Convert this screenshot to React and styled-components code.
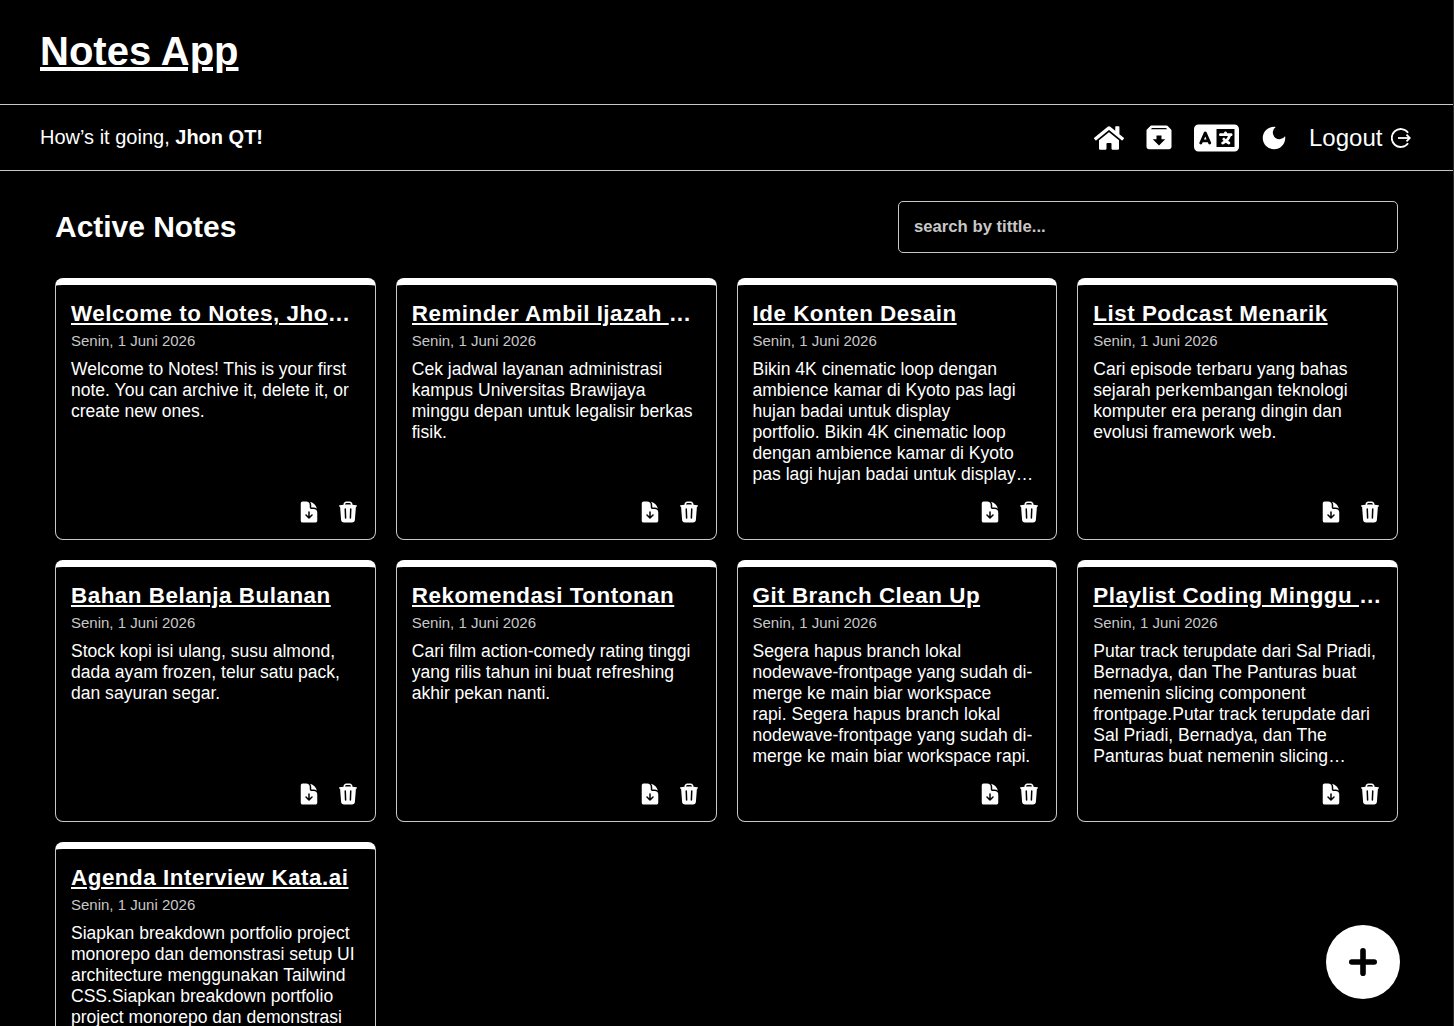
import React, { useState } from 'react';
import styled, { createGlobalStyle } from 'styled-components';
import { FaHome } from 'react-icons/fa';
import { FaLanguage } from 'react-icons/fa6';
import { BiSolidArchiveIn } from 'react-icons/bi';
import { MdDarkMode } from 'react-icons/md';
import { HiDocumentArrowDown, HiTrash } from 'react-icons/hi2';

const notes = [
  {
    id: 1,
    title: 'Welcome to Notes, Jhon QT!',
    body: 'Welcome to Notes! This is your first note. You can archive it, delete it, or create new ones.',
  },
  {
    id: 2,
    title: 'Reminder Ambil Ijazah Kampus',
    body: 'Cek jadwal layanan administrasi kampus Universitas Brawijaya minggu depan untuk legalisir berkas fisik.',
  },
  {
    id: 3,
    title: 'Ide Konten Desain',
    body: 'Bikin 4K cinematic loop dengan ambience kamar di Kyoto pas lagi hujan badai untuk display portfolio.\u00a0Bikin 4K cinematic loop dengan ambience kamar di Kyoto pas lagi hujan badai untuk display portfolio.',
  },
  {
    id: 4,
    title: 'List Podcast Menarik',
    body: 'Cari episode terbaru yang bahas sejarah perkembangan teknologi komputer era perang dingin dan evolusi framework web.',
  },
  {
    id: 5,
    title: 'Bahan Belanja Bulanan',
    body: 'Stock kopi isi ulang, susu almond, dada ayam frozen, telur satu pack, dan sayuran segar.',
  },
  {
    id: 6,
    title: 'Rekomendasi Tontonan',
    body: 'Cari film action-comedy rating tinggi yang rilis tahun ini buat refreshing akhir pekan nanti.',
  },
  {
    id: 7,
    title: 'Git Branch Clean Up',
    body: 'Segera hapus branch lokal nodewave-frontpage yang sudah di-merge ke main biar workspace rapi.\u00a0Segera hapus branch lokal nodewave-frontpage yang sudah di-merge ke main biar workspace rapi.',
  },
  {
    id: 8,
    title: 'Playlist Coding Minggu Ini',
    body: 'Putar track terupdate dari Sal Priadi, Bernadya, dan The Panturas buat nemenin slicing component frontpage.Putar track terupdate dari Sal Priadi, Bernadya, dan The Panturas buat nemenin slicing component frontpage.',
  },
  {
    id: 9,
    title: 'Agenda Interview Kata.ai',
    body: 'Siapkan breakdown portfolio project monorepo dan demonstrasi setup UI architecture menggunakan Tailwind CSS.Siapkan breakdown portfolio project monorepo dan demonstrasi setup UI architecture menggunakan Tailwind CSS.',
  },
];

const LogoutIcon = () => (
  <svg width="20" height="20" viewBox="0 0 20 20" fill="none" stroke="currentColor" strokeWidth="1.8">
    <path d="M17.1 4.8A9 9 0 1 0 17.1 15.2" />
    <path d="M7 10H18.6" />
    <path d="M15.5 6.7L18.8 10L15.5 13.3" />
  </svg>
);

const PlusIcon = () => (
  <svg width="28" height="28" viewBox="0 0 28 28" stroke="currentColor" strokeWidth="5.6" strokeLinecap="round">
    <path d="M14 2.8V25.2M2.8 14H25.2" />
  </svg>
);

const NoteItem = ({ title, body }) => (
  <Card>
    <CardTitle>
      <a href="#note">{title}</a>
    </CardTitle>
    <CardDate>Senin, 1 Juni 2026</CardDate>
    <CardBody>{body}</CardBody>
    <CardActions>
      <IconButton aria-label="Archive">
        <HiDocumentArrowDown size={24} />
      </IconButton>
      <IconButton aria-label="Delete">
        <HiTrash size={24} />
      </IconButton>
    </CardActions>
  </Card>
);

const App = () => {
  const [keyword, setKeyword] = useState('');
  const filtered = notes.filter((note) => note.title.toLowerCase().includes(keyword.toLowerCase()));

  return (
    <>
      <GlobalStyle />
      <Page>
        <Header>
          <Brand>
            <a href="#home">Notes App</a>
          </Brand>
        </Header>
        <NavBar>
          <Greeting>
            How’s it going, <strong>Jhon QT!</strong>
          </Greeting>
          <NavList>
            <IconButton aria-label="Home">
              <FaHome size={30} />
            </IconButton>
            <IconButton aria-label="Archived notes">
              <BiSolidArchiveIn size={30} />
            </IconButton>
            <IconButton aria-label="Language">
              <LanguageIcon />
            </IconButton>
            <IconButton aria-label="Theme">
              <MdDarkMode size={30} />
            </IconButton>
            <LogoutButton>
              Logout <LogoutIcon />
            </LogoutButton>
          </NavList>
        </NavBar>
        <Main>
          <TitleRow>
            <PageTitle>Active Notes</PageTitle>
            <SearchInput
              type="text"
              placeholder="search by tittle..."
              value={keyword}
              onChange={(e) => setKeyword(e.target.value)}
            />
          </TitleRow>
          <NotesGrid>
            {filtered.map((note) => (
              <NoteItem key={note.id} title={note.title} body={note.body} />
            ))}
          </NotesGrid>
        </Main>
        <AddButton aria-label="Add note">
          <PlusIcon />
        </AddButton>
      </Page>
    </>
  );
};

export default App;

const GlobalStyle = createGlobalStyle`
  * {
    box-sizing: border-box;
    margin: 0;
    padding: 0;
  }

  body {
    background-color: #000;
    color: #fff;
    font-family: Arial, "Liberation Sans", sans-serif;
    overflow: hidden;
  }

  a {
    color: inherit;
  }
`;

const Page = styled.div`
  height: 100vh;
  overflow: hidden;
  border-right: 1px solid #2b2b2b;
`;

const Header = styled.header`
  display: flex;
  align-items: center;
  height: 105px;
  padding: 0 40px 2px;
  border-bottom: 1px solid #c8c8c8;
`;

const Brand = styled.h1`
  font-size: 40px;
  line-height: 46px;

  a {
    text-decoration-thickness: 4px;
  }
`;

const NavBar = styled.nav`
  display: flex;
  align-items: center;
  justify-content: space-between;
  height: 66px;
  padding: 0 42px 0 40px;
  border-bottom: 1px solid #c8c8c8;
`;

const Greeting = styled.p`
  font-size: 20px;
`;

const NavList = styled.div`
  display: flex;
  align-items: center;
  gap: 20px;
`;

const IconButton = styled.button`
  display: flex;
  align-items: center;
  border: none;
  background: none;
  color: #fff;
  cursor: pointer;
`;

const LanguageIcon = styled(FaLanguage)`
  width: 45px;
  height: 36px;
`;

const LogoutButton = styled(IconButton)`
  gap: 8.6px;
  font-family: inherit;
  font-size: 24px;
`;

const Main = styled.main`
  padding: 30px 55px;
`;

const TitleRow = styled.div`
  display: flex;
  align-items: center;
  justify-content: space-between;
  margin-bottom: 25px;
`;

const PageTitle = styled.h2`
  font-size: 30px;
  letter-spacing: -0.03px;
`;

const SearchInput = styled.input`
  width: 500px;
  height: 52px;
  padding: 0 15px;
  border: 1px solid #c8c8c8;
  border-radius: 5px;
  outline: none;
  background-color: transparent;
  color: #fff;
  font-family: inherit;
  font-size: 16.7px;
  font-weight: bold;

  &::placeholder {
    color: #c8c8c8;
  }
`;

const NotesGrid = styled.div`
  display: grid;
  grid-template-columns: repeat(4, minmax(0, 1fr));
  gap: 20px;
`;

const Card = styled.article`
  display: flex;
  flex-direction: column;
  height: 262px;
  padding: 15px;
  border: 1px solid #c8c8c8;
  border-top: 7px solid #fff;
  border-radius: 8px;
`;

const CardTitle = styled.h3`
  overflow: hidden;
  text-overflow: ellipsis;
  white-space: nowrap;
  font-size: 22.4px;
  line-height: 27px;
  letter-spacing: 0.52px;
`;

const CardDate = styled.p`
  margin-top: 5px;
  font-size: 15px;
  line-height: 18px;
  color: #c8c8c8;
`;

const CardBody = styled.p`
  display: -webkit-box;
  overflow: hidden;
  margin-top: 9px;
  font-size: 17.54px;
  line-height: 21px;
  -webkit-box-orient: vertical;
  -webkit-line-clamp: 6;
`;

const CardActions = styled.div`
  display: flex;
  justify-content: flex-end;
  gap: 15px;
  margin-top: auto;
`;

const AddButton = styled.button`
  position: fixed;
  right: 54px;
  bottom: 27px;
  display: flex;
  align-items: center;
  justify-content: center;
  width: 74px;
  height: 74px;
  border: none;
  border-radius: 50%;
  background-color: #fff;
  color: #000;
  cursor: pointer;
`;
